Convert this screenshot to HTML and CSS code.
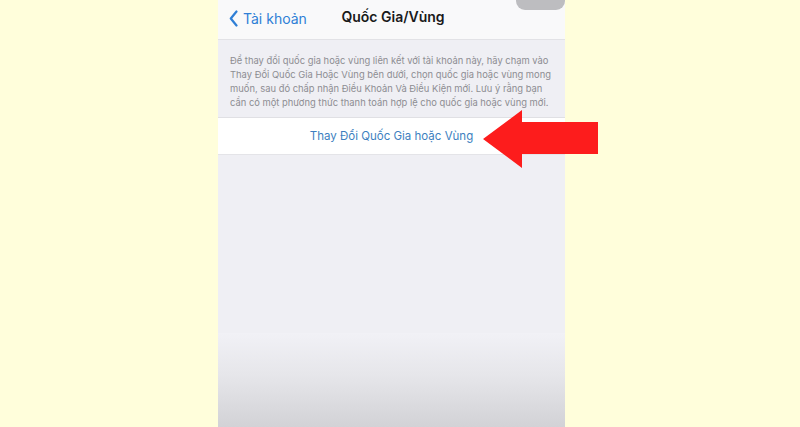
FILE: index.html
```html
<!DOCTYPE html>
<html lang="vi">
<head>
<meta charset="utf-8">
<link rel="stylesheet" href="styles.css">
</head>
<body>
<div class="stage">
  <div class="phone">
    <div class="nav">
      <div class="back">
        <svg class="chev" width="9" height="17" viewBox="0 0 9 17"><path d="M7.5 1.5 L1.8 8.5 L7.5 15.5" fill="none" stroke="#2f7fd6" stroke-width="2.2" stroke-linecap="round" stroke-linejoin="round"/></svg>
        <span>Tài khoản</span>
      </div>
      <div class="title">Quốc Gia/Vùng</div>
      <div class="pill"></div>
    </div>
    <div class="content">
      <p class="desc">Để thay đổi quốc gia hoặc vùng liên kết với tài khoản này, hãy chạm vào<br>Thay Đổi Quốc Gia Hoặc Vùng bên dưới, chọn quốc gia hoặc vùng mong<br>muốn, sau đó chấp nhận Điều Khoản Và Điều Kiện mới. Lưu ý rằng bạn<br>cần có một phương thức thanh toán hợp lệ cho quốc gia hoặc vùng mới.</p>
      <div class="row">Thay Đổi Quốc Gia hoặc Vùng</div>
      <div class="fill"></div>
      <div class="fade"></div>
    </div>
  </div>
  <svg class="arrow" width="116" height="60" viewBox="0 0 116 60"><polygon points="0,29 39,0 39,12 115,12 115,44 39,44 39,58" fill="#fd1c1c"/></svg>
</div>
</body>
</html>
```
FILE: styles.css
```css
html, body {
  margin: 0;
  padding: 0;
  background: #fffedb;
  width: 800px;
  height: 427px;
  overflow: hidden;
  font-family: Inter, "Noto Sans", sans-serif;
}
.stage {
  position: relative;
  height: 427px;
  padding-left: 218px;
}
.phone {
  width: 347px;
  height: 427px;
  display: flex;
  flex-direction: column;
  background: #efeff4;
}
.nav {
  position: relative;
  height: 39px;
  flex: none;
  background: #f9f9fa;
  border-bottom: 1px solid #e2e2e6;
  display: flex;
  align-items: center;
  justify-content: center;
}
.back {
  position: absolute;
  left: 11px;
  top: 10px;
  display: flex;
  align-items: center;
  gap: 5px;
  color: #2f7fd6;
  font-size: 14px;
}
.chev { display: block; }
.title {
  font-size: 14px;
  font-weight: 600;
  color: #1a1a1a;
  margin-top: -6px;
  margin-left: 3px;
}
.pill {
  position: absolute;
  right: 0;
  top: 0;
  width: 49px;
  height: 10px;
  background: #bdbdc0;
  border-radius: 0 0 9px 9px;
}
.content {
  flex: 1;
  display: flex;
  flex-direction: column;
}
.desc {
  margin: 0;
  padding: 14px 8px 7px 12px;
  font-size: 9.4px;
  line-height: 14px;
  color: #8d8d92;
  white-space: nowrap;
}
.row {
  height: 36px;
  background: #ffffff;
  border-top: 1px solid #e0e0e4;
  border-bottom: 1px solid #e4e4e8;
  display: flex;
  align-items: center;
  justify-content: center;
  color: #3d7fc0;
  font-size: 11.5px;
}
.fill {
  flex: 1;
}
.fade {
  height: 94px;
  background: linear-gradient(#f1f1f6, #e6e6ea 45%, #d2d2d6);
}
.arrow {
  position: absolute;
  left: 483px;
  top: 110px;
}
```
